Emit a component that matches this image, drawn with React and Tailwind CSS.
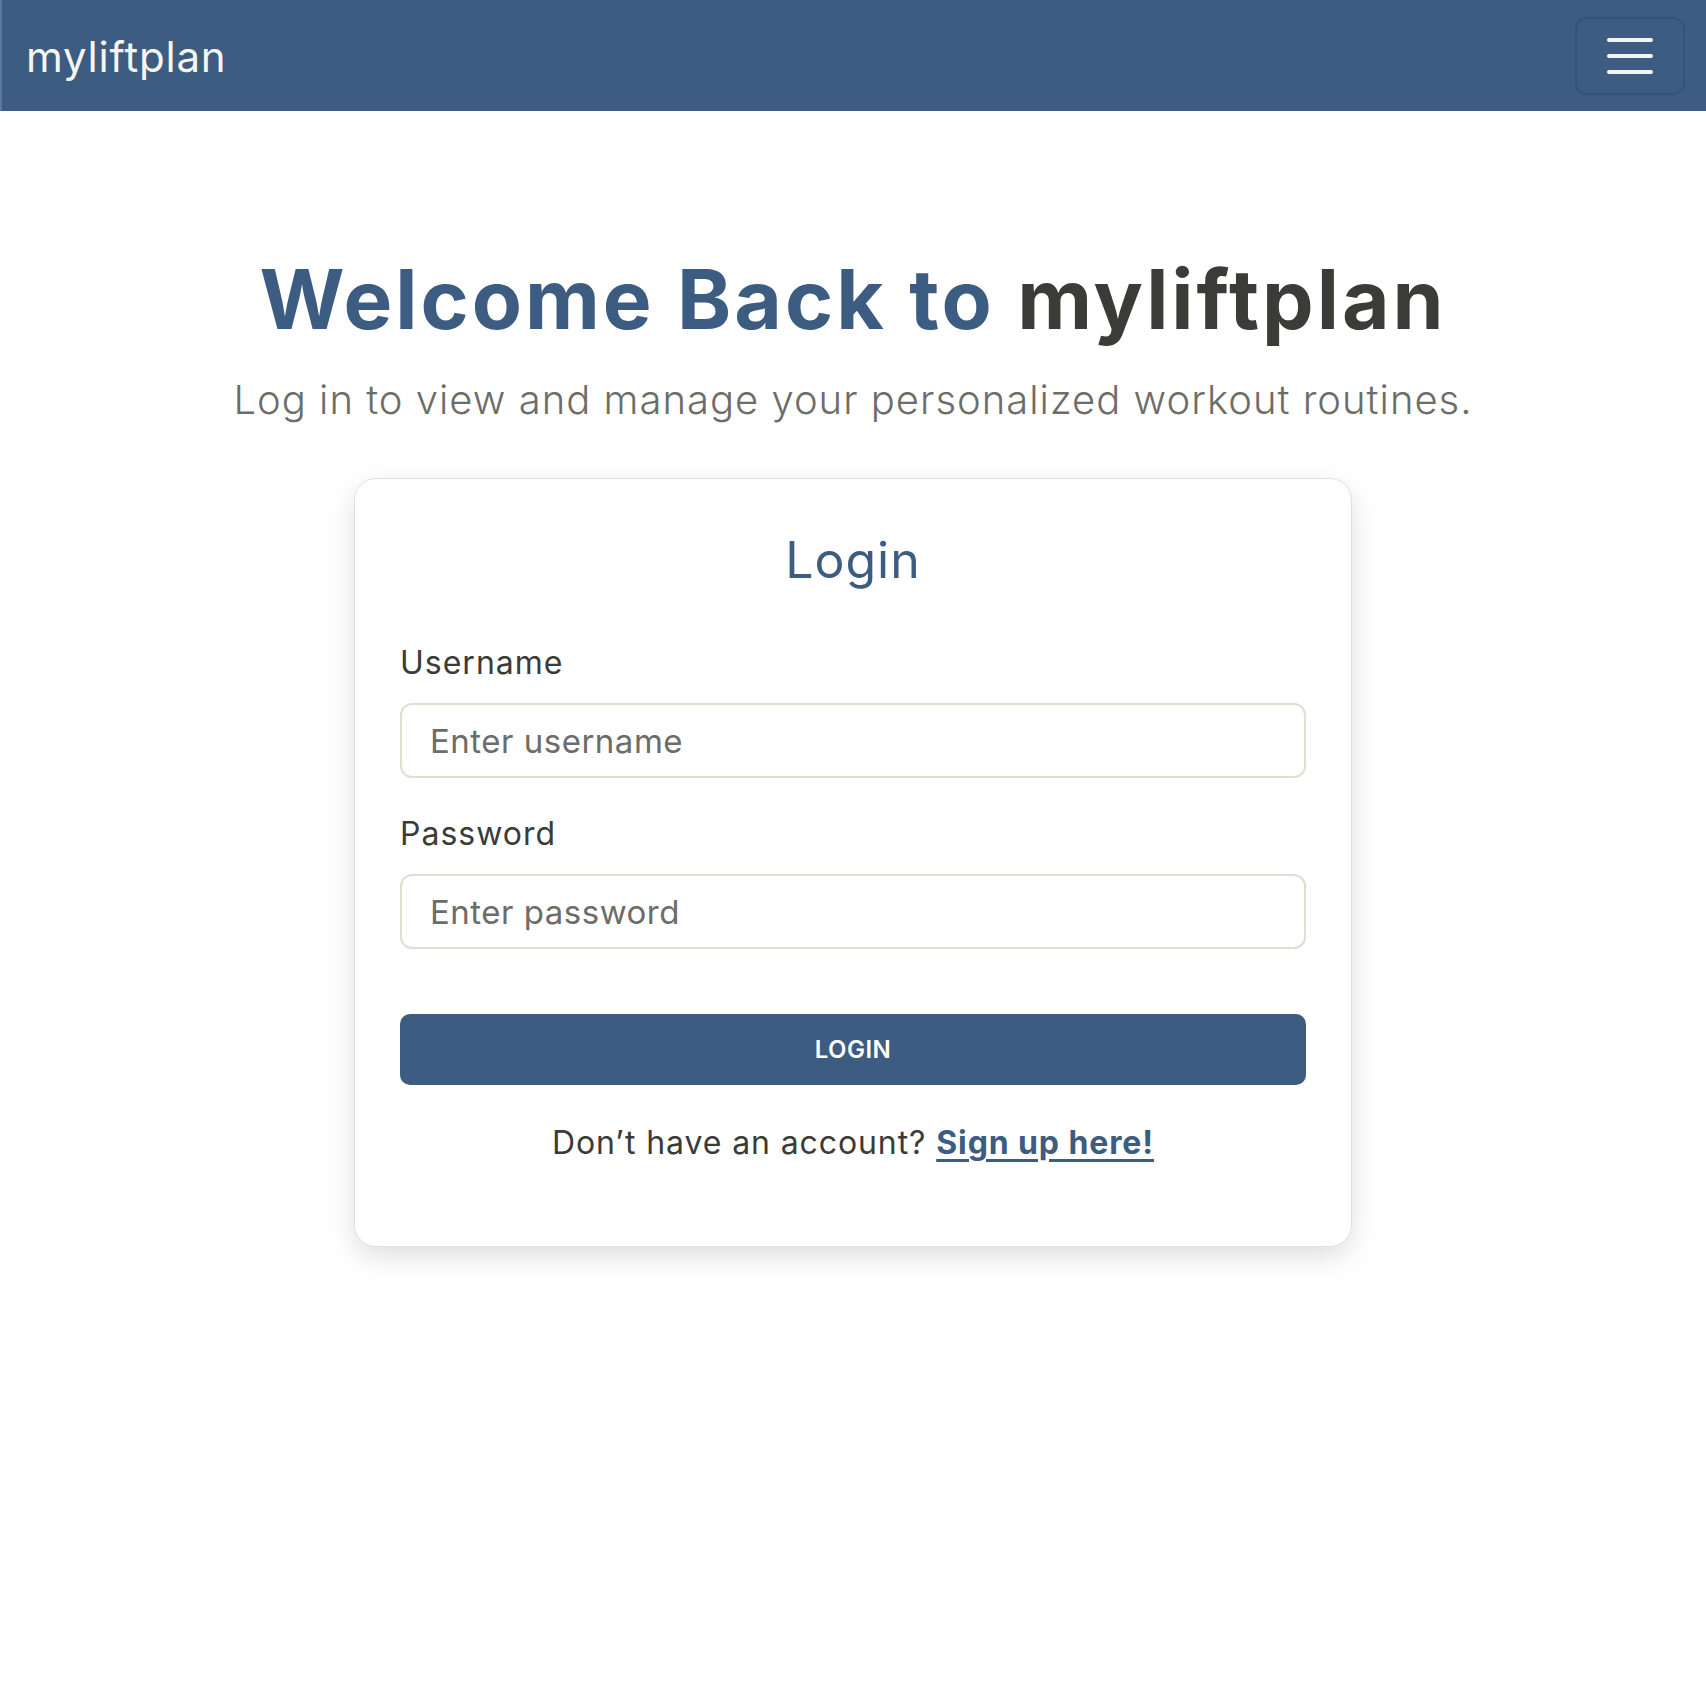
import React from 'react';

export default function App() {
  return (
    <div className="min-h-[1684px] bg-white font-['Inter',sans-serif] text-[#3b3b37]">
      <nav className="h-[111px] bg-[#3c5c82] border-l-2 border-[#5d7899] flex items-center justify-between pl-[24px] pr-[21px]">
        <a className="text-[42px] leading-none text-[#f7f5f0] tracking-[0.8px] pt-[2px]">myliftplan</a>
        <button className="w-[110px] h-[78px] rounded-[12px] border-2 border-[#35527a] flex flex-col items-center justify-center gap-[12px]">
          <span className="block w-[46px] h-[4px] rounded-full bg-[#f5f5f7]" />
          <span className="block w-[46px] h-[4px] rounded-full bg-[#f5f5f7]" />
          <span className="block w-[46px] h-[4px] rounded-full bg-[#f5f5f7]" />
        </button>
      </nav>

      <main className="flex flex-col items-center">
        <h1 className="mt-[148px] text-[82px] leading-none font-bold tracking-[3px]">
          <span className="text-[#3c5c82]">Welcome Back to </span>
          <span className="text-[#3b3b37]">myliftplan</span>
        </h1>
        <p className="mt-[39px] text-[40px] leading-none font-light tracking-[1px] text-[#6d6d68]">
          Log in to view and manage your personalized workout routines.
        </p>

        <div className="mt-[58px] w-[998px] bg-white border border-[#e6e0d6] rounded-[22px] shadow-[0_10px_28px_rgba(0,0,0,0.13)] px-[45px] pt-[56px] pb-[87px]">
          <h2 className="text-center text-[50px] leading-none tracking-[1px] text-[#3c5c82]">Login</h2>

          <label className="block mt-[62px] text-[32px] leading-none tracking-[1px] text-[#3b3b37]">Username</label>
          <input
            className="mt-[24px] w-full h-[75px] rounded-[12px] border-2 border-[#e2dcd1] px-[28px] text-[33px] tracking-[0.5px] text-[#3b3b37] placeholder:text-[#6c6c68] outline-none"
            placeholder="Enter username"
          />

          <label className="block mt-[40px] text-[32px] leading-none tracking-[1px] text-[#3b3b37]">Password</label>
          <input
            type="password"
            className="mt-[24px] w-full h-[75px] rounded-[12px] border-2 border-[#e2dcd1] px-[28px] text-[33px] tracking-[0.5px] text-[#3b3b37] placeholder:text-[#6c6c68] outline-none"
            placeholder="Enter password"
          />

          <button className="mt-[65px] w-full h-[71px] rounded-[10px] bg-[#3c5c82] text-white text-[24px] font-semibold tracking-[0.5px]">
            LOGIN
          </button>

          <p className="mt-[42px] text-center text-[32px] leading-none tracking-[0.9px] text-[#3b3b37]">
            Don’t have an account?{' '}
            <a className="font-bold text-[#3c5c82] underline underline-offset-[5px] decoration-[3px]">Sign up here!</a>
          </p>
        </div>
      </main>
    </div>
  );
}
